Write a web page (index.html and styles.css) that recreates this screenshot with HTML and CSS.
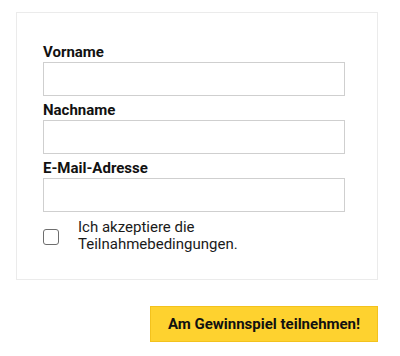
FILE: index.html
```html
<!DOCTYPE html>
<html lang="de">
<head>
    <meta charset="UTF-8">
    <meta name="viewport" content="width=device-width, initial-scale=1.0">
    <title>Gewinnspiel</title>
    <link rel="stylesheet" href="styles.css">
</head>
<body>
    <div class="gewinnspiel-cont">
        <!-- form box with the three fields -->
        <div class="form-box">
            <div class="field-cont">
                <label class="field-label" for="vorname">Vorname</label>
                <input type="text" id="vorname" class="field-input">
            </div>
            <div class="field-cont">
                <label class="field-label" for="nachname">Nachname</label>
                <input type="text" id="nachname" class="field-input">
            </div>
            <div class="field-cont">
                <label class="field-label" for="email">E-Mail-Adresse</label>
                <input type="email" id="email" class="field-input">
            </div>
            <div class="accept-cont">
                <input type="checkbox" id="accept" class="accept-checkbox">
                <label for="accept" class="accept-label">Ich akzeptiere die<br>Teilnahmebedingungen.</label>
            </div>
        </div>
        <div class="submit-row">
            <div class="submit-btn">Am Gewinnspiel teilnehmen!</div>
        </div>
    </div>
</body>
</html>
```
FILE: styles.css
```css
body {
    margin: 0;
    font-family: Roboto, "Liberation Sans", sans-serif;
    color: #111;
    background: #fff;
}

.gewinnspiel-cont {
    width: 362px;
    margin-left: 16px;
    padding-top: 12px;
}

.form-box {
    border: 1px solid #ebebeb;
    padding: 29px 32px 26px 26px;
}

.field-cont {
    margin-bottom: 4px;
}

.field-label {
    display: block;
    font-size: 15px;
    font-weight: bold;
    line-height: 20px;
}

.field-input {
    display: block;
    width: 100%;
    height: 34px;
    margin: 0;
    border: 1px solid #cfcfcf;
    box-sizing: border-box;
    font-size: 15px;
}

.accept-cont {
    display: flex;
    align-items: center;
    margin-top: 7px;
}

.accept-checkbox {
    appearance: none;
    -webkit-appearance: none;
    width: 16px;
    height: 16px;
    margin: 2px 19px 0 0;
    border: 1px solid #6e6e6e;
    border-radius: 3px;
    background: #fff;
    flex-shrink: 0;
}

.accept-label {
    font-size: 15px;
    line-height: 17px;
    color: #1a1a1a;
}

.submit-row {
    display: flex;
    justify-content: flex-end;
    margin-top: 26px;
}

.submit-btn {
    width: 228px;
    height: 36px;
    box-sizing: border-box;
    border: 1px solid #f3c21d;
    background-color: #fed22f;
    font-size: 15px;
    font-weight: bold;
    display: flex;
    align-items: center;
    justify-content: center;
    cursor: pointer;
}
```
